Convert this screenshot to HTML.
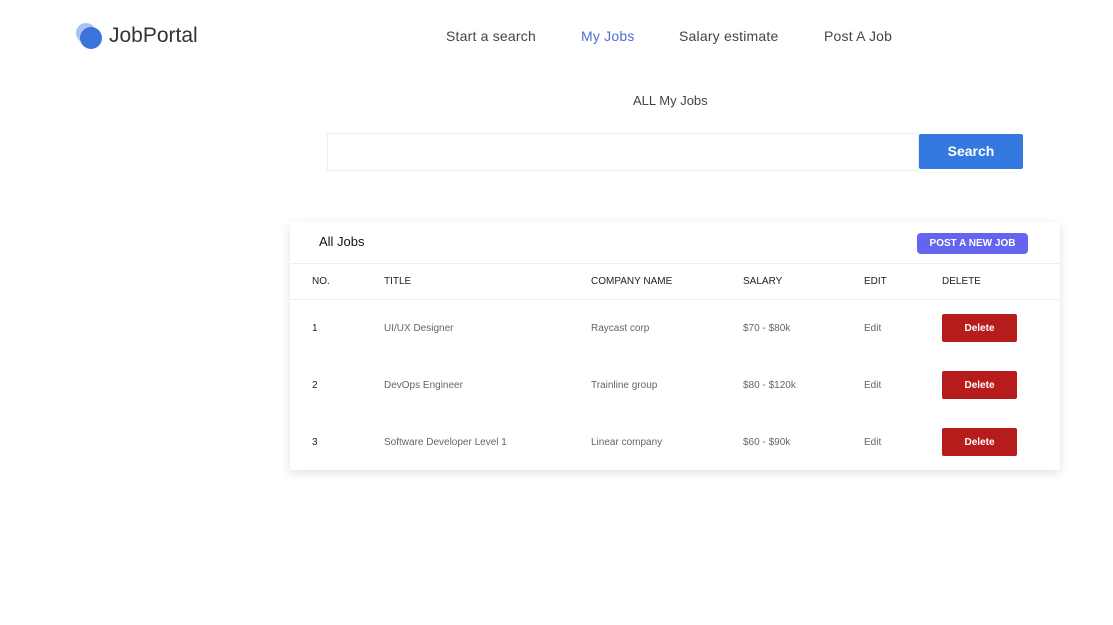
<!DOCTYPE html>
<html><head><style>
body{margin:0;width:1113px;height:625px;background:#fff;font-family:"Liberation Sans",sans-serif;position:relative;overflow:hidden;color:#222}
.a{position:absolute}
.nav{font-size:14px;color:#444;top:28px;letter-spacing:.2px}
.card{left:290px;top:222px;width:770px;height:248px;background:#fff;box-shadow:0 3px 10px rgba(0,0,0,.12)}
.c{position:absolute;font-size:10px;color:#666}
.h{font-size:10px;color:#222}
.del{position:absolute;left:652px;width:75px;height:28px;background:#b71c1c;border-radius:2px;color:#fff;font-size:10px;font-weight:bold;display:flex;align-items:center;justify-content:center}
</style></head><body>
<div class="a" style="left:76px;top:23px;width:20px;height:20px;border-radius:50%;background:#a9c2f2"></div>
<div class="a" style="left:80px;top:27px;width:22px;height:22px;border-radius:50%;background:#3b73dd"></div>
<div class="a" style="left:109px;top:24px;font-size:21px;color:#333">JobPortal</div>
<div class="a nav" style="left:446px">Start a search</div>
<div class="a nav" style="left:581px;color:#4a6fd0">My Jobs</div>
<div class="a nav" style="left:679px">Salary estimate</div>
<div class="a nav" style="left:824px">Post A Job</div>
<div class="a" style="left:633px;top:93px;font-size:13px;color:#444">ALL My Jobs</div>
<div class="a" style="left:327px;top:133px;width:590px;height:36px;border:1px solid #eee"></div>
<div class="a" style="left:919px;top:134px;width:104px;height:35px;background:#3478e0;color:#fff;font-weight:bold;font-size:14px;text-align:center;line-height:35px;border-radius:2px">Search</div>
<div class="a card">
<div class="a" style="left:29px;top:12px;font-size:13px;color:#111">All Jobs</div>
<div class="a" style="left:627px;top:11px;width:111px;height:21px;background:#6464ee;border-radius:4px;color:#fff;font-size:10px;font-weight:bold;display:flex;align-items:center;justify-content:center">POST A NEW JOB</div>
<div class="a" style="left:0;top:41px;width:770px;border-top:1px solid #eee"></div>
<div class="a" style="left:0;top:77px;width:770px;border-top:1px solid #eee"></div>
<div class="c h" style="left:22px;top:54px">NO.</div>
<div class="c h" style="left:94px;top:54px">TITLE</div>
<div class="c h" style="left:301px;top:54px">COMPANY NAME</div>
<div class="c h" style="left:453px;top:54px">SALARY</div>
<div class="c h" style="left:574px;top:54px">EDIT</div>
<div class="c h" style="left:652px;top:54px">DELETE</div>

<div class="c" style="left:22px;top:101px;color:#222">1</div><div class="c" style="left:94px;top:101px">UI/UX Designer</div><div class="c" style="left:301px;top:101px">Raycast corp</div><div class="c" style="left:453px;top:101px">$70 - $80k</div><div class="c" style="left:574px;top:101px">Edit</div><div class="del" style="top:92px">Delete</div>
<div class="c" style="left:22px;top:158px;color:#222">2</div><div class="c" style="left:94px;top:158px">DevOps Engineer</div><div class="c" style="left:301px;top:158px">Trainline group</div><div class="c" style="left:453px;top:158px">$80 - $120k</div><div class="c" style="left:574px;top:158px">Edit</div><div class="del" style="top:149px">Delete</div>
<div class="c" style="left:22px;top:215px;color:#222">3</div><div class="c" style="left:94px;top:215px">Software Developer Level 1</div><div class="c" style="left:301px;top:215px">Linear company</div><div class="c" style="left:453px;top:215px">$60 - $90k</div><div class="c" style="left:574px;top:215px">Edit</div><div class="del" style="top:206px">Delete</div>
</div>
</body></html>
